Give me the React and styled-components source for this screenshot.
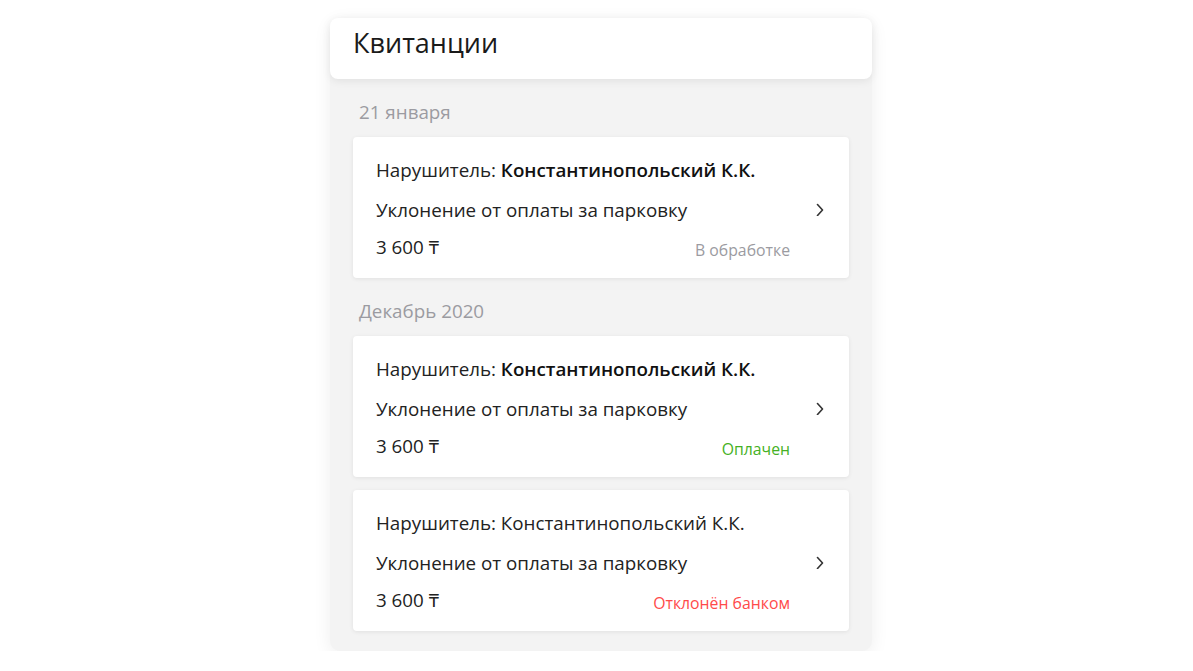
import styled, { createGlobalStyle } from 'styled-components';

const GlobalStyle = createGlobalStyle`
  body {
    margin: 0;
    background: #fff;
    font-family: "Open Sans", "Noto Sans", sans-serif;
    color: #222;
  }
`;

const Page = styled.div`
  display: flex;
  justify-content: center;
  padding: 18px 0 0 9px;
`;

const Panel = styled.section`
  width: 542px;
  background: #f3f3f3;
  border-radius: 10px;
  box-shadow: 0 4px 18px rgba(0, 0, 0, 0.07);
  padding-bottom: 20px;
`;

const Header = styled.header`
  height: 61px;
  background: #fff;
  border-radius: 8px;
  box-shadow: 0 2px 8px rgba(0, 0, 0, 0.08);
  padding: 0 23px 12px;
  display: flex;
  align-items: center;
  box-sizing: border-box;
`;

const Title = styled.h1`
  margin: 0;
  font-size: 27px;
  font-weight: 500;
  color: #1a1a1a;
`;

const Body = styled.div`
  padding: 0 23px;
`;

const DateLabel = styled.div`
  font-size: 18.8px;
  line-height: 24px;
  color: #9b9ba1;
  padding-left: 6px;
  margin: 21px 0 13px;
`;

const CardList = styled.div`
  display: flex;
  flex-direction: column;
  gap: 13px;
`;

const Card = styled.div`
  background: #fff;
  border-radius: 4px;
  box-shadow: 0 1px 4px rgba(0, 0, 0, 0.08);
  padding: 21px 24px 19px 23px;
  display: flex;
  align-items: center;
  gap: 25px;
`;

const Info = styled.div`
  flex: 1;
  display: flex;
  flex-direction: column;
`;

const Line = styled.div`
  font-size: 18.8px;
  line-height: 24px;
  color: #222;
  margin-top: ${p => p.$gap || 0}px;
`;

const Name = styled.span`
  font-weight: ${p => (p.$bold ? 600 : 400)};
  color: ${p => (p.$bold ? '#111' : '#222')};
`;

const Bottom = styled.div`
  display: flex;
  justify-content: space-between;
  align-items: flex-end;
  margin-top: 13px;
`;

const Amount = styled.span`
  font-size: 18.8px;
  line-height: 24px;
  color: #222;
`;

const statusColors = {
  pending: '#9b9ba1',
  paid: '#45b124',
  declined: '#ff4a4a',
};

const Status = styled.span`
  font-size: 15.8px;
  line-height: 18px;
  color: ${p => statusColors[p.$kind]};
`;

const Chevron = () => (
  <svg width="10" height="14" viewBox="0 0 10 14" fill="none">
    <path d="M2.5 2.5 L7.5 8 L2.5 13.5" stroke="#333" strokeWidth="1.6" strokeLinecap="round" strokeLinejoin="round" />
  </svg>
);

const statusText = {
  pending: 'В обработке',
  paid: 'Оплачен',
  declined: 'Отклонён банком',
};

const Receipt = ({ bold, kind }) => (
  <Card>
    <Info>
      <Line>
        Нарушитель: <Name $bold={bold}>Константинопольский К.К.</Name>
      </Line>
      <Line $gap={16}>Уклонение от оплаты за парковку</Line>
      <Bottom>
        <Amount>3 600 ₸</Amount>
        <Status $kind={kind}>{statusText[kind]}</Status>
      </Bottom>
    </Info>
    <Chevron />
  </Card>
);

const App = () => (
  <>
    <GlobalStyle />
    <Page>
      <Panel>
        <Header>
          <Title>Квитанции</Title>
        </Header>
        <Body>
          <DateLabel>21 января</DateLabel>
          <CardList>
            <Receipt bold kind="pending" />
          </CardList>
          <DateLabel>Декабрь 2020</DateLabel>
          <CardList>
            <Receipt bold kind="paid" />
            <Receipt kind="declined" />
          </CardList>
        </Body>
      </Panel>
    </Page>
  </>
);

export default App;
